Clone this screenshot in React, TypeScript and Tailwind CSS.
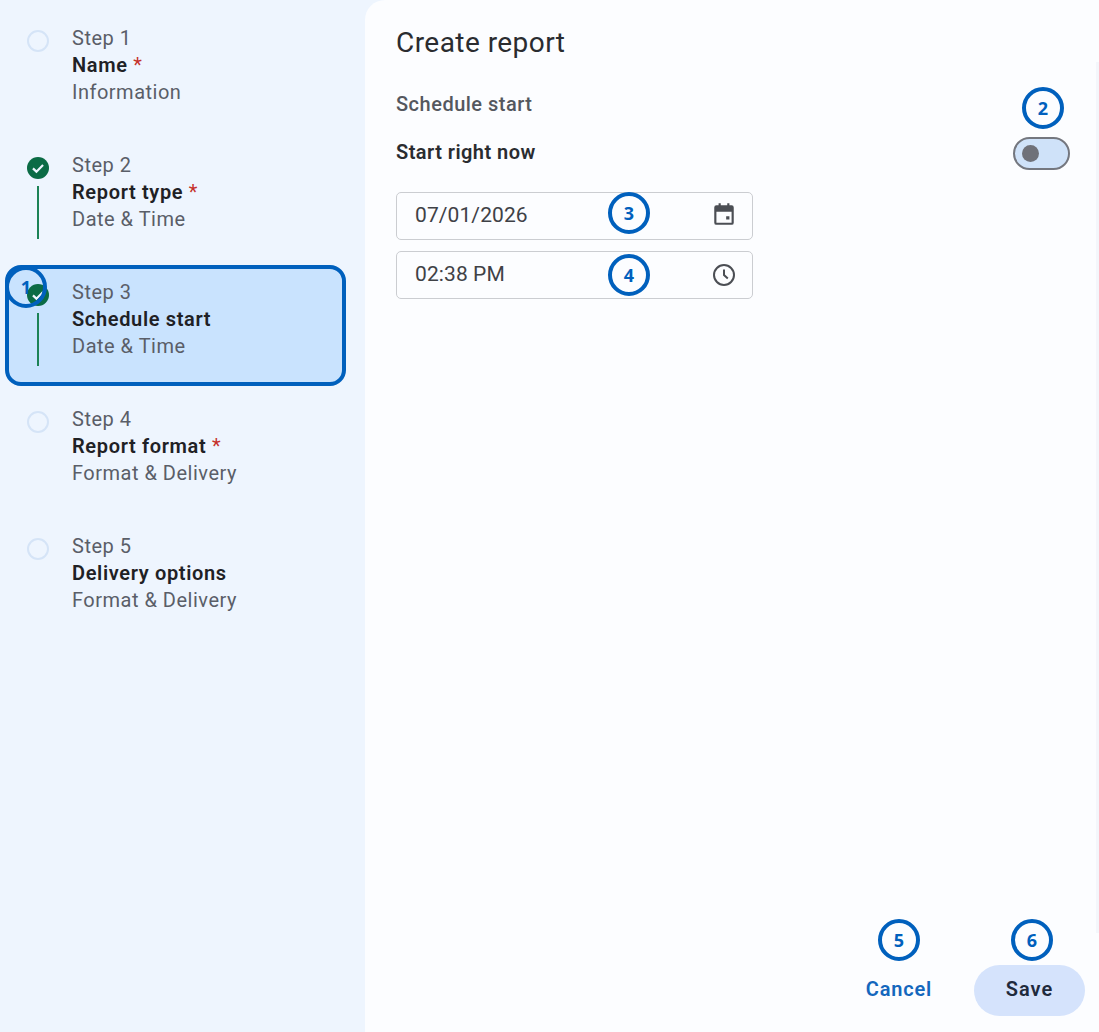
type Step = { label: string; name: string; sub: string; required?: boolean; done?: boolean; active?: boolean };

const steps: Step[] = [
  { label: "Step 1", name: "Name", sub: "Information", required: true },
  { label: "Step 2", name: "Report type", sub: "Date & Time", required: true, done: true },
  { label: "Step 3", name: "Schedule start", sub: "Date & Time", done: true, active: true },
  { label: "Step 4", name: "Report format", sub: "Format & Delivery", required: true },
  { label: "Step 5", name: "Delivery options", sub: "Format & Delivery" },
];

function CheckDot() {
  return (
    <svg width="22" height="22" viewBox="0 0 24 24" className="mt-[1px] block">
      <circle cx="12" cy="12" r="12" fill="#0b6b45" />
      <path d="M6.5 12.4l3.8 3.6 7.2-7.2" fill="none" stroke="#eef5fe" strokeWidth="2.4" />
    </svg>
  );
}

function Callout({ n, className }: { n: number; className: string }) {
  return (
    <div className={"absolute flex h-[42px] w-[42px] items-center justify-center rounded-full border-[4px] border-[#0060bd] font-['Open_Sans',sans-serif] text-[18px] font-bold text-[#0060bd] " + className}>
      {n}
    </div>
  );
}

function StepRow({ step }: { step: Step }) {
  return (
    <div className={"flex h-[121px] gap-[22px] rounded-[16px] border-[4px] pl-[17px] pt-[10px] " + (step.active ? "border-[#0060bd] bg-[#c9e3fe]" : "border-transparent")}>
      <div className="flex w-[24px] flex-col items-center pt-[4px]">
        {step.done ? (
          <>
            <CheckDot />
            <div className="mt-[7px] h-[53px] w-[2px] bg-[#1c8256]" />
          </>
        ) : (
          <div className="mt-[1px] h-[22px] w-[22px] rounded-full border-2 border-[#d5e4f7]" />
        )}
      </div>
      <div className="text-[20px] leading-[27px] tracking-[0.5px] text-[#5a5e68]">
        <div>{step.label}</div>
        <div className="font-semibold tracking-[0.65px] text-[#1f2125]">
          {step.name}
          {step.required && <span className="font-normal text-[#c5312b]"> *</span>}
        </div>
        <div>{step.sub}</div>
      </div>
    </div>
  );
}

export default function App() {
  return (
    <div className="relative flex h-[1032px] w-[1099px] overflow-hidden bg-[#eef5fe] font-['Roboto',sans-serif]">
      <aside className="flex w-[365px] shrink-0 flex-col gap-[6px] pl-[5px] pr-[19px] pt-[11px]">
        {steps.map((s) => (
          <StepRow key={s.label} step={s} />
        ))}
      </aside>

      <main className="flex flex-1 flex-col rounded-tl-[20px] bg-[#fcfdff] pl-[31px] pr-[29px]">
        <h1 className="mt-[23px] text-[28px] leading-[40px] tracking-[0.45px] text-[#2a2c30]">Create report</h1>
        <div className="mt-[28px] text-[20px] font-medium leading-[26px] tracking-[0.5px] text-[#54575e]">Schedule start</div>
        <div className="mt-[15px] flex h-[42px] items-center justify-between">
          <span className="pb-[2px] text-[20px] font-semibold tracking-[0.45px] text-[#2a2c30]">Start right now</span>
          <div className="flex h-[33px] w-[57px] items-center rounded-full border-[2px] border-[#74777f] bg-[#cfe2f9] pl-[7px]">
            <div className="h-[17px] w-[17px] rounded-full bg-[#6f7179]" />
          </div>
        </div>

        <div className="mt-[18px] flex w-[357px] flex-col gap-[11px]">
          <div className="flex h-[48px] items-center justify-between rounded-[5px] border border-[#cbcdd1] pl-[18px] pr-[16px] text-[21px] tracking-[0.1px] text-[#3f4146]">
            07/01/2026
            <svg width="26" height="26" viewBox="0 0 24 24" fill="#4b4e54" className="-mr-[1px] mb-[4px]">
              <path d="M7 2h2v2h6V2h2v2h2a2 2 0 0 1 2 2v14a2 2 0 0 1-2 2H5a2 2 0 0 1-2-2V6a2 2 0 0 1 2-2h2V2zM5 10v10h14V10H5zm9 4h3v3h-3v-3z" fillRule="evenodd" />
            </svg>
          </div>
          <div className="flex h-[48px] items-center justify-between rounded-[5px] border border-[#cbcdd1] pl-[18px] pr-[16px] text-[21px] tracking-[0.1px] text-[#3f4146]">
            02:38 PM
            <svg width="24" height="24" viewBox="0 0 24 24" fill="none" stroke="#4b4e54" strokeWidth="2">
              <circle cx="12" cy="12" r="10" />
              <path d="M12 6.5V12l3.8 3.4" />
            </svg>
          </div>
        </div>

        <div className="mt-auto mb-[16px] flex items-center justify-end gap-[42px]">
          <button className="pb-[3px] text-[20px] font-semibold tracking-[0.8px] text-[#1467bd]">Cancel</button>
          <button className="-mr-[15px] h-[51px] w-[111px] rounded-full bg-[#d5e3fc] pb-[3px] text-[20px] font-semibold tracking-[1px] text-[#1f2a3c]">Save</button>
        </div>
      </main>

      {/* faint scrollbar track on the right edge */}
      <div className="absolute right-0 top-[62px] h-[871px] w-[3px] bg-[#f4f6fb]" />

      <Callout n={1} className="left-[5px] top-[266px]" />
      <Callout n={2} className="left-[1022px] top-[87px]" />
      <Callout n={3} className="left-[608px] top-[192px]" />
      <Callout n={4} className="left-[608px] top-[254px]" />
      <Callout n={5} className="left-[878px] top-[919px]" />
      <Callout n={6} className="left-[1011px] top-[919px]" />
    </div>
  );
}
